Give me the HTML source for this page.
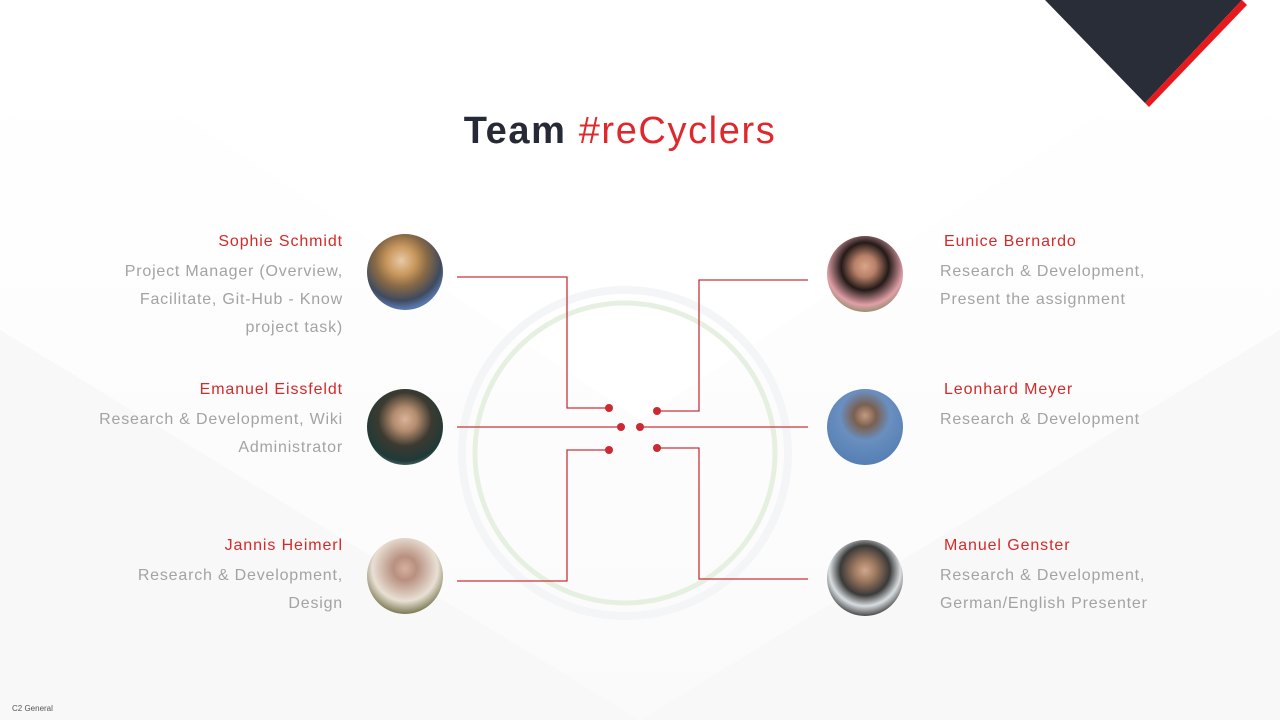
<!DOCTYPE html>
<html><head><meta charset="utf-8"><style>
body{margin:0;width:1280px;height:720px;overflow:hidden;background:#fff;font-family:"Liberation Sans",sans-serif;position:relative}
.t{position:absolute;font-size:16px;line-height:28px;color:#a3a3a3;white-space:nowrap;letter-spacing:0.8px}
.n{color:#d42a2a;display:block;margin-bottom:2px;letter-spacing:0.9px}
.l{text-align:right;right:937px}
.r{left:940px}
.r .n{margin-left:4px}
.p{position:absolute;width:76px;height:76px;border-radius:50%;overflow:hidden}
h1{position:absolute;left:0;width:1240px;top:110px;margin:0;text-align:center;font-size:38px;font-weight:bold;color:#262a36;letter-spacing:1.6px}
h1 span{color:#e0282c;font-weight:normal}
</style></head><body>
<svg width="1280" height="720" style="position:absolute;left:0;top:0">
<defs><linearGradient id="bg" x1="0" y1="0" x2="0" y2="1"><stop offset="0" stop-color="#fff"/><stop offset="1" stop-color="#f7f7f7"/></linearGradient></defs>
<polygon points="100,60 640,420 1180,60 1280,120 1280,720 0,720 0,120" fill="url(#bg)" opacity="0.6"/>
<polygon points="0,330 640,720 0,720" fill="#f8f8f8"/>
<polygon points="1280,330 640,720 1280,720" fill="#f8f8f8"/>
<polygon points="1045,0 1242,0 1145,103" fill="#292d38"/>
<polygon points="1242,0 1247,5 1149,107 1145,103" fill="#e8191c"/>
<circle cx="625" cy="453" r="163" fill="none" stroke="#f4f5f7" stroke-width="8"/>
<circle cx="625" cy="453" r="150" fill="none" stroke="#e6f0e1" stroke-width="5"/>
<g stroke="#c8343a" stroke-width="1.3" fill="none">
<polyline points="457,277 567,277 567,408 609,408"/>
<polyline points="808,280 699,280 699,411 657,411"/>
<line x1="457" y1="427" x2="620" y2="427"/>
<line x1="640" y1="427" x2="808" y2="427"/>
<polyline points="457,581 567,581 567,450 609,450"/>
<polyline points="808,579 699,579 699,448 657,448"/>
</g>
<g fill="#cc2a33">
<circle cx="609" cy="408" r="4"/><circle cx="657" cy="411" r="4"/>
<circle cx="621" cy="427" r="4"/><circle cx="640" cy="427" r="4"/>
<circle cx="609" cy="450" r="4"/><circle cx="657" cy="448" r="4"/>
</g>
</svg>
<h1>Team <span>#reCyclers</span></h1>

<div class="p" style="left:367px;top:234px;background:radial-gradient(circle at 45% 35%,#e8c9a8 0,#c9995e 22%,#8a6a45 40%,#3f4a5e 62%,#5a79b0 75%,#2a2a2a 100%)"></div>
<div class="p" style="left:367px;top:389px;background:radial-gradient(circle at 50% 40%,#d9b39a 0,#b48c6e 20%,#3c3a30 45%,#1f3a38 70%,#b9cde0 100%)"></div>
<div class="p" style="left:367px;top:538px;background:radial-gradient(circle at 50% 40%,#d8b0a0 0,#b89080 20%,#e8e0d4 55%,#6b6a40 80%,#3a3a28 100%)"></div>
<div class="p" style="left:827px;top:236px;background:radial-gradient(circle at 50% 40%,#d9a68a 0,#b88068 18%,#241a18 40%,#e0a0a8 65%,#4f7a3a 90%)"></div>
<div class="p" style="left:827px;top:389px;background:radial-gradient(circle at 50% 35%,#c49a80 0,#7a6050 18%,#6a8fc0 40%,#4a76ac 100%)"></div>
<div class="p" style="left:827px;top:540px;background:radial-gradient(circle at 50% 40%,#d0a890 0,#a07a60 18%,#3a3a3a 42%,#d8dde0 60%,#2e2e2e 80%)"></div>

<div class="t l" style="top:228px"><span class="n">Sophie Schmidt</span>Project Manager (Overview,<br>Facilitate, Git-Hub - Know<br>project task)</div>
<div class="t l" style="top:376px"><span class="n">Emanuel Eissfeldt</span>Research &amp; Development, Wiki<br>Administrator</div>
<div class="t l" style="top:532px"><span class="n">Jannis Heimerl</span>Research &amp; Development,<br>Design</div>
<div class="t r" style="top:228px"><span class="n">Eunice Bernardo</span>Research &amp; Development,<br>Present the assignment</div>
<div class="t r" style="top:376px"><span class="n">Leonhard Meyer</span>Research &amp; Development</div>
<div class="t r" style="top:532px"><span class="n">Manuel Genster</span>Research &amp; Development,<br>German/English Presenter</div>
<div style="position:absolute;left:12px;top:704px;font-size:8px;color:#555">C2 General</div>
</body></html>
